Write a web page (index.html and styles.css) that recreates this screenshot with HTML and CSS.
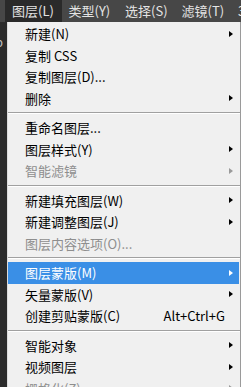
FILE: index.html
```html
<!DOCTYPE html>
<html>
<head>
<meta charset="utf-8">
<link rel="stylesheet" href="styles.css">
</head>
<body>

<div class="menubar">
  <div class="bar-item open">图层(L)</div>
  <div class="bar-item">类型(Y)</div>
  <div class="bar-item">选择(S)</div>
  <div class="bar-item">滤镜(T)</div>
  <div class="bar-item">3</div>
</div>

<div class="workspace">
  <div class="side-strip"><span class="side-letter">b</span></div>

  <div class="menu">
    <div class="item">新建(N)<span class="arrow"></span></div>
    <div class="item">复制 CSS</div>
    <div class="item">复制图层(D)...</div>
    <div class="item">删除<span class="arrow"></span></div>
    <div class="sep"></div>
    <div class="item">重命名图层...</div>
    <div class="item">图层样式(Y)<span class="arrow"></span></div>
    <div class="item disabled">智能滤镜<span class="arrow"></span></div>
    <div class="sep"></div>
    <div class="item">新建填充图层(W)<span class="arrow"></span></div>
    <div class="item">新建调整图层(J)<span class="arrow"></span></div>
    <div class="item disabled">图层内容选项(O)...</div>
    <div class="sep"></div>
    <div class="item active">图层蒙版(M)<span class="arrow"></span></div>
    <div class="item">矢量蒙版(V)<span class="arrow"></span></div>
    <div class="item">创建剪贴蒙版(C)<span class="shortcut">Alt+Ctrl+G</span></div>
    <div class="sep"></div>
    <div class="item">智能对象<span class="arrow"></span></div>
    <div class="item">视频图层<span class="arrow"></span></div>
    <div class="item disabled">栅格化(Z)<span class="arrow"></span></div>
  </div>
</div>

</body>
</html>
```

FILE: styles.css
```css
body {
  margin: 0;
  background-color: #2c2c2c;
  font-family: "Noto Sans CJK SC", "Noto Sans", sans-serif;
  font-size: 13px;
  overflow: hidden;
  height: 387px;
}

.menubar {
  display: flex;
  height: 22px;
  padding-left: 5px;
  background-color: #474747;
  color: #e4e4e4;
  white-space: nowrap;
}

.bar-item {
  flex: 0 0 56.5px;
  box-sizing: border-box;
  padding-left: 7px;
  line-height: 21px;
}

.bar-item.open {
  background-color: #2a2a2a;
}

.workspace {
  display: flex;
  height: 365px;
  overflow: hidden;
}

.side-strip {
  width: 7px;
  flex-shrink: 0;
  background-color: #2b2b2b;
  overflow: hidden;
}

.side-letter {
  display: block;
  margin: 10px 0 0 -5px; /* only the edge of the letter shows */
  color: #bdbdbd;
  line-height: 20px;
}

.menu {
  flex: 1;
  background-color: #f0f0f0;
  border-left: 1px solid #dcdcdc;
  border-right: 1px solid #9a9a9a;
  padding-top: 1px;
}

.item {
  display: flex;
  align-items: center;
  height: 21.5px;
  padding-left: 17px;
  padding-right: 7px;
  color: #000;
  white-space: nowrap;
}

.item.disabled {
  color: #8e8e8e;
}

.item.active {
  background-color: #3a8fe6;
  color: #fff;
  margin-right: 1px;
}

.arrow {
  margin-left: auto;
  width: 0;
  height: 0;
  border-top: 3.5px solid transparent;
  border-bottom: 3.5px solid transparent;
  border-left: 4px solid #000;
}

.disabled .arrow {
  border-left-color: #9a9a9a;
}

.active .arrow {
  border-left-color: #fff;
  margin-right: -1px;
}

.shortcut {
  margin-left: auto;
  margin-right: 8px;
}

.sep {
  height: 8px;
  display: flex;
  flex-direction: column;
  justify-content: center;
}

.sep::before {
  content: '';
  display: block;
  height: 1px;
  background-color: #a0a0a0;
}

.sep::after {
  content: '';
  display: block;
  height: 1px;
  background-color: #ffffff;
}
```
